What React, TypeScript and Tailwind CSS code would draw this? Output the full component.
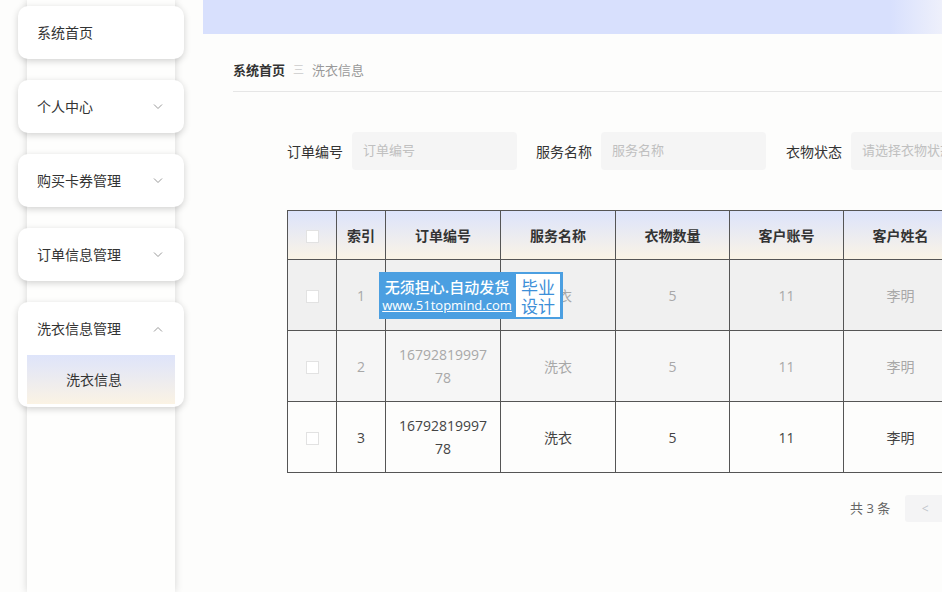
import React from 'react';

const rows = [
  { idx: 1, order: ['16792819997', '78'], service: '洗衣', qty: 5, account: 11, name: '李明', tone: 'bg-[#f0f0f0] text-[#a8a8a8]' },
  { idx: 2, order: ['16792819997', '78'], service: '洗衣', qty: 5, account: 11, name: '李明', tone: 'bg-[#f6f6f6] text-[#a8a8a8]' },
  { idx: 3, order: ['16792819997', '78'], service: '洗衣', qty: 5, account: 11, name: '李明', tone: 'bg-[#fdfdfc] text-[#444]' },
];

function Chevron({ up }: { up?: boolean }) {
  return (
    <svg width="10" height="6" viewBox="0 0 10 6" className="text-[#999]">
      <path d={up ? 'M1 5.5 5 1.5 9 5.5' : 'M1 0.5 5 4.5 9 0.5'} fill="none" stroke="currentColor" strokeWidth="1" />
    </svg>
  );
}

function MenuCard({ label, chevron, up, children }: { label: string; chevron?: boolean; up?: boolean; children?: React.ReactNode }) {
  return (
    <div className="-mx-[9px] bg-white rounded-[10px] shadow-[0_2px_7px_rgba(0,0,0,0.18)]">
      <div className="h-[53px] flex items-center justify-between pl-[19px] pr-[21px] text-[14px] text-[#333]">
        <span>{label}</span>
        {chevron && <Chevron up={up} />}
      </div>
      {children}
    </div>
  );
}

function Field({ label, placeholder, gap }: { label: string; placeholder: string; gap: string }) {
  return (
    <div className={`flex items-center shrink-0 ${gap}`}>
      <span className="text-[#333] w-[65px] shrink-0">{label}</span>
      <div className="w-[165px] h-[38px] shrink-0 rounded-[4px] bg-[#f5f5f5] flex items-center pl-[11px] text-[13px] text-[#c0c0c0] whitespace-nowrap overflow-hidden">
        {placeholder}
      </div>
    </div>
  );
}

export default function App() {
  return (
    <div className="relative w-[942px] h-[592px] overflow-hidden flex bg-[#fdfdfc] font-['Open_Sans','Noto_Sans_CJK_SC',sans-serif]">
      {/* Sidebar */}
      <aside className="w-[203px] shrink-0 pl-[27px] pr-[28px]">
        <div className="h-full bg-[#fefefd] shadow-[0_0_8px_rgba(0,0,0,0.16)] pt-[6px] flex flex-col gap-[21px]">
          <MenuCard label="系统首页" />
          <MenuCard label="个人中心" chevron />
          <MenuCard label="购买卡券管理" chevron />
          <MenuCard label="订单信息管理" chevron />
          <MenuCard label="洗衣信息管理" chevron up>
            <div className="mx-[9px] h-[49px] mb-[3px] flex items-center pl-[39px] text-[14px] text-[#333] bg-gradient-to-b from-[#dee4fa] to-[#fbf3e4]">
              洗衣信息
            </div>
          </MenuCard>
        </div>
      </aside>

      {/* Main */}
      <main className="flex-1 min-w-0 overflow-hidden">
        <div className="h-[34px] bg-[linear-gradient(90deg,#d8e0fd_0%,#d8e0fd_93%,#eef0fb_100%)]" />

        <div className="pl-[30px]">
          <div className="h-[58px] flex items-center gap-[8px] text-[13px] border-b border-[#e6e6e6] pt-[16px]">
            <span className="font-bold text-[#333]">系统首页</span>
            <span className="text-[#ccc] text-[11px]">三</span>
            <span className="text-[#999]">洗衣信息</span>
          </div>

          <div className="pl-[54px] mt-[40px] flex items-center text-[14px]">
            <Field label="订单编号" placeholder="订单编号" gap="" />
            <Field label="服务名称" placeholder="服务名称" gap="ml-[19px]" />
            <Field label="衣物状态" placeholder="请选择衣物状态" gap="ml-[20px]" />
          </div>

          <div className="pl-[54px] mt-[40px]">
            <table className="border-collapse table-fixed w-[900px] text-[14px] text-center">
              <colgroup>
                <col className="w-[49px]" />
                <col className="w-[49px]" />
                <col className="w-[115px]" />
                <col className="w-[115px]" />
                <col className="w-[114px]" />
                <col className="w-[114px]" />
                <col className="w-[114px]" />
                <col className="w-[230px]" />
              </colgroup>
              <thead>
                <tr className="h-[49px] bg-gradient-to-b from-[#dce3fb] to-[#fbf4e5]">
                  <th className="border border-[#555]">
                    <span className="inline-block w-[13px] h-[13px] bg-white border border-[#e2e2e2] align-middle" />
                  </th>
                  {['索引', '订单编号', '服务名称', '衣物数量', '客户账号', '客户姓名', '洗衣状态'].map((h) => (
                    <th key={h} className="border border-[#555] font-bold text-[#333] whitespace-nowrap">{h}</th>
                  ))}
                </tr>
              </thead>
              <tbody>
                {rows.map((r) => (
                  <tr key={r.idx} className={`h-[71px] ${r.tone}`}>
                    <td className="border border-[#555]">
                      <span className="inline-block w-[13px] h-[13px] bg-white border border-[#e2e2e2] align-middle" />
                    </td>
                    <td className="border border-[#555]">{r.idx}</td>
                    <td className="border border-[#555] leading-[23px]">
                      {r.order[0]}
                      <br />
                      {r.order[1]}
                    </td>
                    <td className="border border-[#555]">{r.service}</td>
                    <td className="border border-[#555]">{r.qty}</td>
                    <td className="border border-[#555]">{r.account}</td>
                    <td className="border border-[#555]">{r.name}</td>
                    <td className="border border-[#555]">已完成</td>
                  </tr>
                ))}
              </tbody>
            </table>

            <div className="mt-[22px] flex items-center pl-[563px] text-[13px] text-[#666]">
              <span className="whitespace-nowrap">共 3 条</span>
              <div className="ml-[15px] w-[40px] h-[27px] shrink-0 rounded-[3px] bg-[#f4f4f5] flex items-center justify-center text-[#c0c4cc] text-[12px]">&lt;</div>
            </div>
          </div>
        </div>
      </main>

      {/* Watermark overlay */}
      <div className="absolute left-[379px] top-[272px] w-[184px] h-[47px] bg-[#4b9fe1] flex items-center">
        <div className="w-[136px] flex flex-col items-center text-white leading-none">
          <span className="text-[15px] font-medium font-['Noto_Sans_CJK_SC',sans-serif]">无须担心.自动发货</span>
          <span className="mt-[5px] text-[13px] underline font-['Open_Sans',sans-serif]">www.51topmind.com</span>
        </div>
        <div className="ml-[1px] w-[44px] h-[43px] bg-white flex flex-col items-center justify-center text-[#3d8fd8] text-[17px] leading-[19px] font-['Noto_Sans_CJK_SC',sans-serif]">
          <span>毕业</span>
          <span>设计</span>
        </div>
      </div>
    </div>
  );
}
